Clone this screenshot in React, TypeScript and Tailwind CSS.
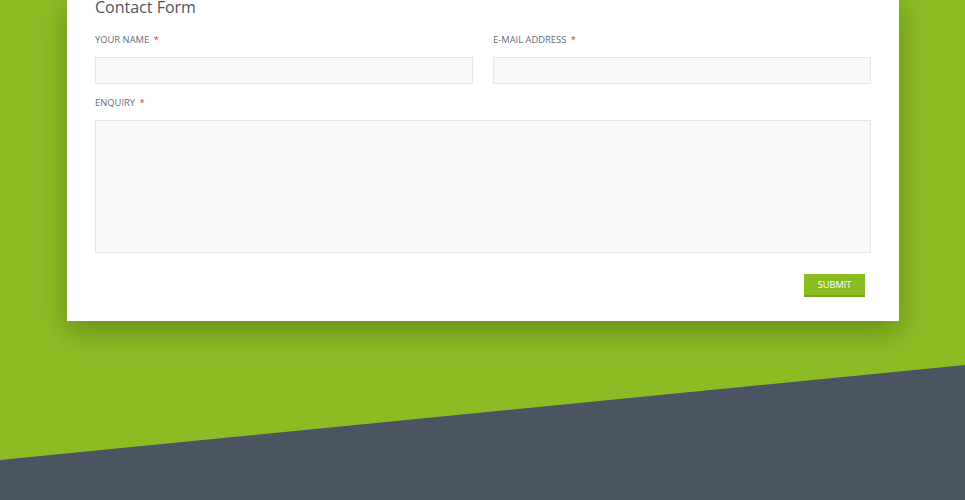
export default function App() {
  return (
    <div className="relative h-[500px] w-full overflow-hidden bg-[#8cbc24]" style={{ fontFamily: '"Open Sans", "Liberation Sans", sans-serif' }}>
      {/* Slanted footer background */}
      <svg className="pointer-events-none absolute inset-0" width="965" height="500" viewBox="0 0 965 500" preserveAspectRatio="none" aria-hidden="true">
        <polygon points="0,460 965,365 965,500 0,500" fill="#4b5561" />
      </svg>

      <div className="relative z-10 ml-[67px] w-[832px] bg-white px-[28px] pb-[24px] pt-0 shadow-[0_10px_28px_rgba(40,60,0,0.35)] -mt-[4px]">
        <h2 className="text-[16px] leading-[23px] font-normal text-[#4b5561]">Contact Form</h2>

        <div className="mt-[14px] grid grid-cols-2 gap-x-[20px]">
          <div className="flex flex-col">
            <label className="text-[9.4px] leading-[14px] uppercase text-[#666c74]">
              Your Name <span className="ml-[2px] text-[#e5322d]">*</span>
            </label>
            <input type="text" className="mt-[10px] h-[27px] w-full border border-[#e6e6e6] bg-[#f9f9f9] outline-none" />
          </div>
          <div className="flex flex-col">
            <label className="text-[9.4px] leading-[14px] uppercase text-[#666c74]">
              E-mail Address <span className="ml-[2px] text-[#e5322d]">*</span>
            </label>
            <input type="text" className="mt-[10px] h-[27px] w-full border border-[#e6e6e6] bg-[#f9f9f9] outline-none" />
          </div>
        </div>

        <div className="mt-[12px] flex flex-col">
          <label className="text-[9.4px] leading-[14px] uppercase text-[#666c74]">
            Enquiry <span className="ml-[2px] text-[#e5322d]">*</span>
          </label>
          <textarea className="mt-[10px] h-[133px] w-full resize-none border border-[#e6e6e6] bg-[#f9f9f9] outline-none" />
        </div>

        <div className="mt-[21px] flex justify-end pr-[6px]">
          <button className="h-[23px] w-[61px] border-b-2 border-[#7aa61c] bg-[#8cbc24] text-[9.2px] uppercase leading-none text-white">
            Submit
          </button>
        </div>
      </div>
    </div>
  );
}
